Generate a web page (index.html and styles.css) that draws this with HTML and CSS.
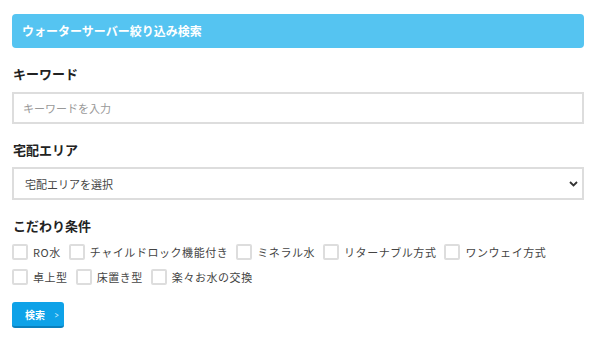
FILE: index.html
```html
<!DOCTYPE html>
<html lang="ja">
<head>
  <meta charset="UTF-8" />
  <title>ウォーターサーバー絞り込み検索</title>
  <link rel="stylesheet" href="styles.css">
</head>
<body>
  <form class="search">
    <h1 class="search-title">ウォーターサーバー絞り込み検索</h1>

    <div class="field">
      <label class="field-label" for="keyword">キーワード</label>
      <input type="text" id="keyword" class="text-input" placeholder="キーワードを入力" />
    </div>

    <div class="field">
      <label class="field-label" for="area">宅配エリア</label>
      <div class="select-wrap">
        <select id="area" class="select-input">
          <option value="">宅配エリアを選択</option>
        </select>
        <svg class="select-arrow" width="9" height="6" viewBox="0 0 9 6">
          <path d="M1 1l3.5 3.5L8 1" fill="none" stroke="#333" stroke-width="1.8"/>
        </svg>
      </div>
    </div>

    <div class="field">
      <span class="field-label">こだわり条件</span>
      <div class="checks">
        <label class="check"><span class="box"></span>RO水</label>
        <label class="check"><span class="box"></span>チャイルドロック機能付き</label>
        <label class="check"><span class="box"></span>ミネラル水</label>
        <label class="check"><span class="box"></span>リターナブル方式</label>
        <label class="check"><span class="box"></span>ワンウェイ方式</label>
        <label class="check"><span class="box"></span>卓上型</label>
        <label class="check"><span class="box"></span>床置き型</label>
        <label class="check"><span class="box"></span>楽々お水の交換</label>
      </div>
    </div>

    <button type="submit" class="submit">検索<span class="submit-arrow">&gt;</span></button>
  </form>
</body>
</html>
```

FILE: styles.css
```css
* {
  margin: 0;
  padding: 0;
  box-sizing: border-box;
}

body {
  background: #fff;
  color: #222;
  font-family: "Noto Sans CJK JP", "Noto Sans", sans-serif;
}

.search {
  padding: 14px 16px 0 12px;
}

.search-title {
  height: 34px;
  line-height: 34px;
  padding-left: 10px;
  background: #55c4f1;
  color: #fff;
  font-size: 12px;
  font-weight: 700;
  border-radius: 4px;
}

.field {
  margin-top: 16px;
}

.field-label {
  display: block;
  font-size: 13px;
  font-weight: 700;
  line-height: 20px;
  color: #222;
  margin-left: 1px;
}

.text-input,
.select-input {
  display: block;
  width: 100%;
  height: 32px;
  margin-top: 8px;
  border: 2px solid #ddd;
  background: #fff;
  font-family: inherit;
  font-size: 11px;
  color: #444;
  padding: 0 9px;
  outline: none;
}

.text-input::placeholder {
  color: #999;
}

.select-wrap {
  position: relative;
  margin-top: 7px;
}

.select-input {
  margin-top: 0;
  height: 33px;
  padding: 0 11px;
  appearance: none;
  -webkit-appearance: none;
  border-radius: 0;
}

.select-arrow {
  position: absolute;
  right: 6px;
  top: 14px;
}

.checks {
  display: flex;
  flex-wrap: wrap;
  gap: 9px 8px;
  margin-top: 8px;
}

.check {
  display: flex;
  align-items: center;
  gap: 5px;
  font-size: 11px;
  letter-spacing: 0.55px;
  line-height: 16px;
  color: #444;
}

.box {
  width: 16px;
  height: 16px;
  border: 2px solid #ddd;
  border-radius: 2px;
  background: #fff;
}

.submit {
  display: flex;
  align-items: center;
  margin-top: 17px;
  width: 52px;
  height: 26px;
  padding-left: 13px;
  background: #0ea2e8;
  border: none;
  border-bottom: 2px solid #0a80bd;
  border-radius: 3px;
  color: #fff;
  font-family: inherit;
  font-size: 10px;
  font-weight: 700;
}

.submit-arrow {
  margin-left: 9px;
  font-weight: 400;
  font-size: 10px;
  transform: scaleX(0.7);
  color: #cfeeff;
}
```
